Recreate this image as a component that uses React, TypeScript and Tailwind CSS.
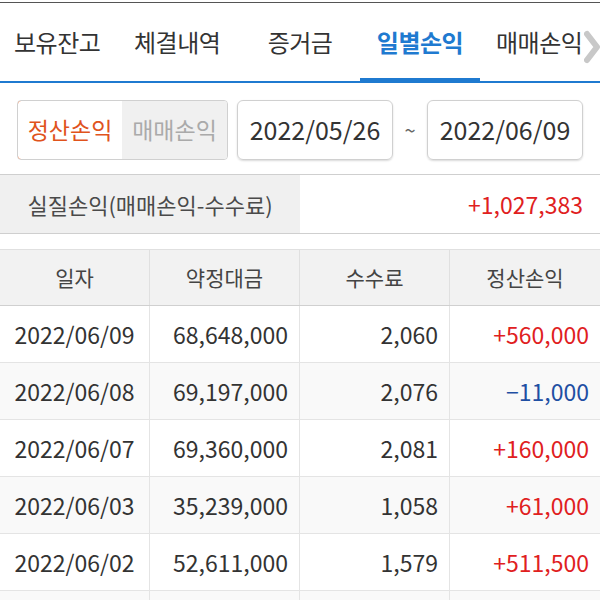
import React from "react";

const tabs = ["보유잔고", "체결내역", "증거금", "일별손익", "매매손익"];

interface Row {
  date: string;
  amount: string;
  fee: string;
  pnl: string;
}

const rows: Row[] = [
  { date: "2022/06/09", amount: "68,648,000", fee: "2,060", pnl: "+560,000" },
  { date: "2022/06/08", amount: "69,197,000", fee: "2,076", pnl: "-11,000" },
  { date: "2022/06/07", amount: "69,360,000", fee: "2,081", pnl: "+160,000" },
  { date: "2022/06/03", amount: "35,239,000", fee: "1,058", pnl: "+61,000" },
  { date: "2022/06/02", amount: "52,611,000", fee: "1,579", pnl: "+511,500" },
];

export default function App() {
  return (
    <div
      className="h-[600px] w-[600px] overflow-hidden bg-white text-[#333]"
      style={{ fontFamily: '"Noto Sans CJK KR", "Noto Sans", sans-serif' }}
    >
      {/* top rule */}
      <div className="h-[3px] border-b border-[#555]" />

      {/* tabs */}
      <div className="relative flex h-[80px] items-center border-b-2 border-[#1f7ad0] text-[24px] tracking-[-0.5px]">
        <div className="w-[120px] pl-[14px] text-[#333]">{tabs[0]}</div>
        <div className="w-[120px] pl-[14px] text-[#333]">{tabs[1]}</div>
        <div className="w-[120px] text-center text-[#333]">{tabs[2]}</div>
        <div className="relative flex h-full w-[120px] items-center justify-center font-bold text-[#1f7ad0]">
          {tabs[3]}
          <div className="absolute bottom-[-2px] left-0 right-0 h-[5px] bg-[#1f7ad0]" />
        </div>
        <div className="w-[120px] pl-[16px] text-[#333]">{tabs[4]}</div>
        <div className="absolute right-0 top-[26px] flex h-[36px] w-[16px] items-center justify-end bg-white">
          <svg width="16" height="34" viewBox="0 0 16 34">
            <polyline
              points="3,4 13,17 3,30"
              fill="none"
              stroke="#c8c8c8"
              strokeWidth="6"
              strokeLinecap="round"
              strokeLinejoin="round"
            />
          </svg>
        </div>
      </div>

      {/* filter row */}
      <div className="flex h-[91px] items-center px-[17px] pt-[2px]">
        <div className="flex h-[60px] w-[211px] overflow-hidden rounded-[4px] border border-[#d0d0d0] text-[23px]">
          <div className="-m-px flex w-[106px] items-center justify-center rounded-l-[4px] border border-[#e8662a] bg-white text-[#e0531c]">
            정산손익
          </div>
          <div className="flex flex-1 items-center justify-center bg-[#f0f0f0] text-[#aaa]">
            매매손익
          </div>
        </div>
        <div className="ml-[9px] flex h-[60px] w-[156px] items-center justify-center rounded-[6px] border border-[#d0d0d0] text-[25px] shadow-[0_1px_2px_rgba(0,0,0,0.15)]">
          2022/05/26
        </div>
        <div className="flex w-[34px] items-center justify-center text-[20px] text-[#666]">~</div>
        <div className="flex h-[60px] w-[156px] items-center justify-center rounded-[6px] border border-[#d0d0d0] text-[25px] shadow-[0_1px_2px_rgba(0,0,0,0.15)]">
          2022/06/09
        </div>
      </div>

      {/* summary */}
      <div className="flex h-[60px] border-y border-[#cfcfcf]">
        <div className="flex w-[300px] items-center justify-center bg-[#f0f0f0] text-[22px] text-[#4a4a4a]">
          실질손익(매매손익-수수료)
        </div>
        <div className="flex flex-1 items-center justify-end pr-[17px] text-[23px] text-[#e0201e]">
          +1,027,383
        </div>
      </div>

      <div className="h-[15px]" />

      {/* table */}
      <div className="border-t border-[#e0e0e0] text-[23px]">
        <div className="grid h-[56px] grid-cols-4 border-b border-[#d0d0d0] bg-[#f2f2f2] text-[21px] text-[#444]">
          {["일자", "약정대금", "수수료", "정산손익"].map((h, i) => (
            <div
              key={h}
              className={`flex items-center justify-center ${i < 3 ? "border-r border-[#e0e0e0]" : ""}`}
            >
              {h}
            </div>
          ))}
        </div>
        {rows.map((r, idx) => (
          <div
            key={r.date}
            className={`grid h-[57px] grid-cols-4 border-b border-[#e4e4e4] ${idx % 2 === 1 ? "bg-[#f9f9f9]" : "bg-white"}`}
          >
            <div className="flex items-center justify-center border-r border-[#e4e4e4]">{r.date}</div>
            <div className="flex items-center justify-end border-r border-[#e4e4e4] pr-[11px]">{r.amount}</div>
            <div className="flex items-center justify-end border-r border-[#e4e4e4] pr-[11px]">{r.fee}</div>
            <div
              className={`flex items-center justify-end pr-[11px] ${r.pnl.startsWith("-") ? "text-[#1f4fa3]" : "text-[#e0201e]"}`}
            >
              {r.pnl.startsWith("-") ? "−" + r.pnl.slice(1) : r.pnl}
            </div>
          </div>
        ))}
        {/* next row, cut by the screen edge */}
        <div className="grid h-[57px] grid-cols-4 bg-[#f9f9f9]">
          <div className="border-r border-[#e4e4e4]" />
          <div className="border-r border-[#e4e4e4]" />
          <div className="border-r border-[#e4e4e4]" />
          <div />
        </div>
      </div>
    </div>
  );
}
